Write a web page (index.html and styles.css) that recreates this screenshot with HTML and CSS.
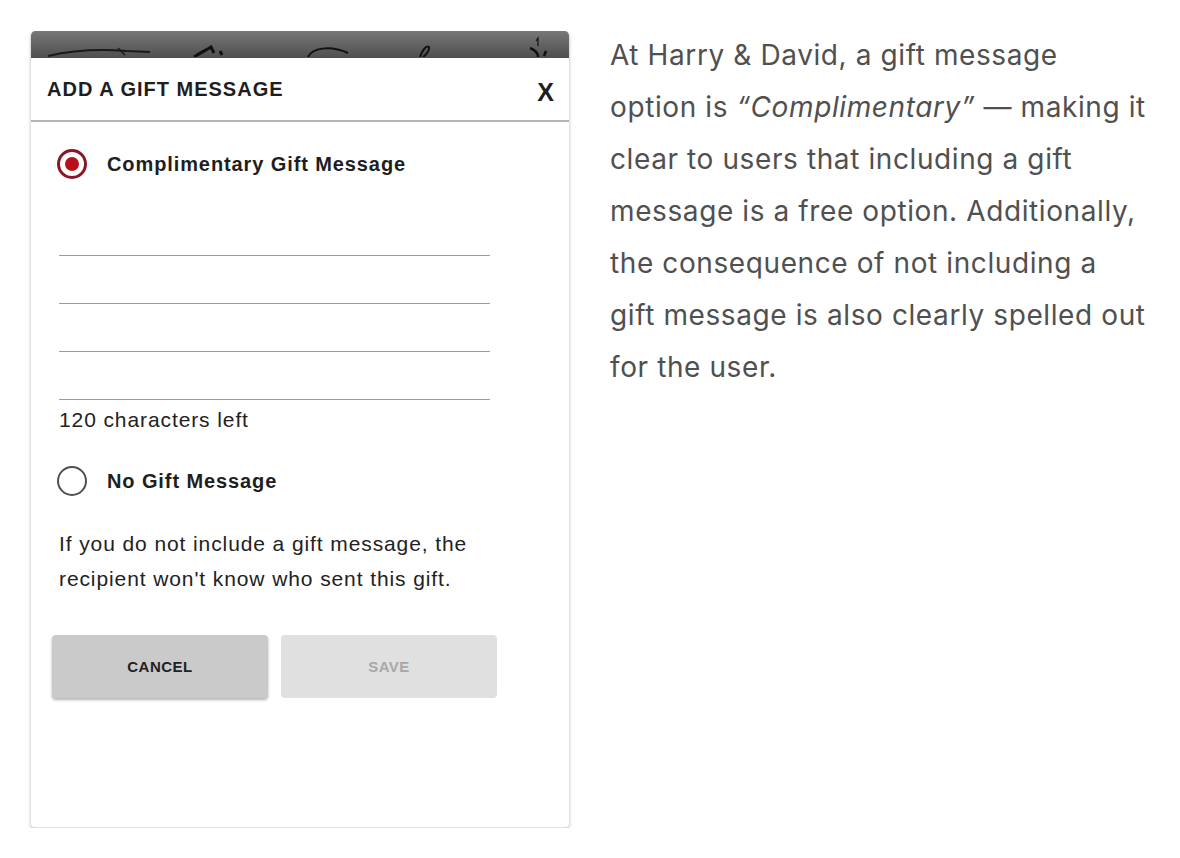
FILE: index.html
```html
<!DOCTYPE html>
<html lang="en">
<head>
<meta charset="utf-8">
<title>Gift message</title>
<link rel="stylesheet" href="styles.css">
</head>
<body>
<div class="page">
  <div class="card">
    <div class="strip">
      <svg class="scribble" width="538" height="26" viewBox="0 0 538 26">
        <path d="M18 25 C 40 20, 70 18, 96 20 L 120 21" stroke="#1a1a1a" stroke-width="2" fill="none"/>
        <path d="M88 17 L 95 24" stroke="#1a1a1a" stroke-width="1.5" fill="none"/>
        <path d="M164 26 C 170 22, 178 18, 181 16 L 184 22" stroke="#111" stroke-width="3" fill="none"/>
        <path d="M190 20 L 192 24" stroke="#111" stroke-width="3" fill="none"/>
        <path d="M278 26 C 282 17, 300 14, 318 22" stroke="#111" stroke-width="2" fill="none"/>
        <path d="M390 26 C 392 20, 396 14, 399 16 C 400 19, 396 24, 393 26" stroke="#111" stroke-width="2" fill="none"/>
        <path d="M500 17 C 505 19, 508 22, 508 26" stroke="#111" stroke-width="2.5" fill="none"/>
        <path d="M506 10 L 508 7 L 508 15" stroke="#111" stroke-width="1.2" fill="none"/>
        <path d="M516 20 L 514 25" stroke="#111" stroke-width="2.5" fill="none"/>
      </svg>
    </div>
    <div class="header">
      <span class="title">ADD A GIFT MESSAGE</span>
      <span class="close">X</span>
    </div>
    <div class="body">
      <div class="option option-first">
        <span class="radio radio-on"><span class="dot"></span></span>
        <span class="label">Complimentary Gift Message</span>
      </div>
      <div class="lines">
        <div class="line"></div>
        <div class="line"></div>
        <div class="line"></div>
        <div class="line"></div>
      </div>
      <div class="count">120 characters left</div>
      <div class="option option-second">
        <span class="radio"></span>
        <span class="label">No Gift Message</span>
      </div>
      <p class="note">If you do not include a gift message, the<br>recipient won't know who sent this gift.</p>
      <div class="buttons">
        <span class="btn btn-cancel">CANCEL</span>
        <span class="btn btn-save">SAVE</span>
      </div>
    </div>
  </div>
  <div class="copy">
    <p>At Harry &amp; David, a gift message<br>option is <em>“Complimentary”</em> — making it<br>clear to users that including a gift<br>message is a free option. Additionally,<br>the consequence of not including a<br>gift message is also clearly spelled out<br>for the user.</p>
  </div>
</div>
</body>
</html>
```

FILE: styles.css
```css
html, body {
  margin: 0;
  padding: 0;
  background: #ffffff;
}

.page {
  display: flex;
  align-items: flex-start;
  padding: 31px 0 0 30px;
  gap: 40px;
}

.card {
  width: 540px;
  height: 797px;
  box-sizing: border-box;
  border: 1px solid #e2e2e2;
  border-top: none;
  border-radius: 5px;
  background: #fff;
  box-shadow: 0 2px 3px rgba(0, 0, 0, 0.18);
  font-family: "Liberation Sans", Arial, sans-serif;
  color: #1e1e1e;
  overflow: hidden;
}

.strip {
  height: 27px;
  background: linear-gradient(#777777, #4f4f4f);
  border-radius: 5px 5px 0 0;
  margin: 0 -1px;
  overflow: hidden;
}

.scribble {
  display: block;
}

.header {
  height: 62px;
  display: flex;
  align-items: center;
  justify-content: space-between;
  padding: 0 15px 0 16px;
  border-bottom: 2px solid #b4b4b4;
}

.title {
  font-size: 20px;
  font-weight: bold;
  letter-spacing: 1px;
  padding-top: 1px;
}

.close {
  font-size: 25px;
  font-weight: bold;
  padding-top: 7px;
}

.body {
  padding-left: 21px;
  display: flex;
  flex-direction: column;
  align-items: flex-start;
}

.option {
  display: flex;
  align-items: center;
  margin-left: 5px;
  height: 30px;
}

.option-first {
  margin-top: 27px;
}

.option-second {
  margin-top: 34px;
}

.radio {
  width: 30px;
  height: 30px;
  box-sizing: border-box;
  border-radius: 50%;
  border: 2.5px solid #505050;
  display: flex;
  align-items: center;
  justify-content: center;
}

.radio-on {
  border: 3px solid #8a1727;
}

.dot {
  width: 14px;
  height: 14px;
  border-radius: 50%;
  background: #b8111e;
}

.label {
  margin-left: 20px;
  font-size: 20px;
  font-weight: bold;
  letter-spacing: 0.9px;
  color: #1e1e1e;
}

.lines {
  margin-top: 29px;
  margin-left: 7px;
  width: 431px;
}

.line {
  height: 47px;
  border-bottom: 1.5px solid #9c9c9c;
}

.count {
  margin: 8px 0 0 7px;
  font-size: 21px;
  line-height: 24px;
  letter-spacing: 0.9px;
  color: #222;
}

.note {
  margin: 30px 0 0 7px;
  font-size: 21px;
  line-height: 35px;
  letter-spacing: 0.9px;
  color: #222;
}

.buttons {
  margin-top: 39px;
  display: flex;
  gap: 13px;
}

.btn {
  width: 216px;
  height: 63px;
  border-radius: 4px;
  display: flex;
  align-items: center;
  justify-content: center;
  font-size: 15px;
  font-weight: bold;
  letter-spacing: 0.5px;
}

.btn-cancel {
  background: #cacaca;
  color: #222;
  box-shadow: 0 2px 3px rgba(0, 0, 0, 0.3);
}

.btn-save {
  background: #e0e0e0;
  color: #a8a8a8;
}

.copy {
  width: 560px;
  margin-top: -2px;
}

.copy p {
  margin: 0;
  font-family: Inter, Lato, sans-serif;
  font-size: 28px;
  line-height: 52px;
  letter-spacing: 0.6px;
  white-space: nowrap;
  color: #505050;
}

.copy em {
  font-style: italic;
}
```
